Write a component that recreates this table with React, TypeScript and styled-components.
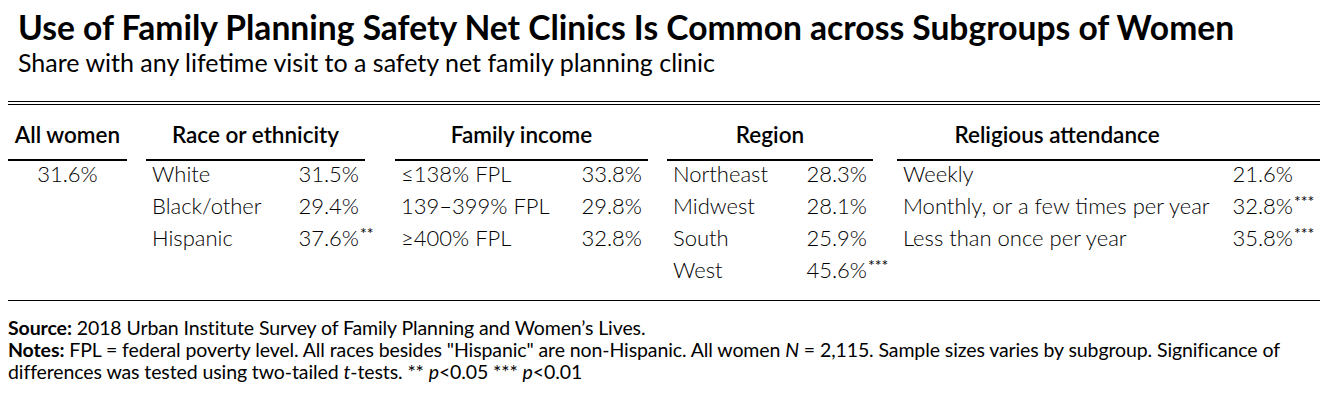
import React from 'react';
import styled, { createGlobalStyle } from 'styled-components';

type Row = { label: string; value: string; sig?: string };
type Group = {
  title: string;
  width: number;
  gapBefore: number;
  valueInset?: number;
  headerShift?: number;
  rows: Row[];
  center?: boolean;
};

const GlobalStyle = createGlobalStyle`
  body {
    margin: 0;
    background: #fff;
    color: #000;
    font-family: Lato, "Open Sans", sans-serif;
  }
`;

const Page = styled.div`
  width: 1328px;
  height: 401px;
  padding: 0 8px;
  box-sizing: border-box;
  overflow: hidden;
`;

const Title = styled.h1`
  margin: 0;
  padding: 10px 0 0 10px;
  font-size: 33.6px;
  line-height: 34px;
  font-weight: 700;
  white-space: nowrap;
`;

const Subtitle = styled.h2`
  margin: 4px 0 0;
  padding-left: 10px;
  font-size: 25px;
  line-height: 28px;
  font-weight: 400;
  white-space: nowrap;
`;

const Table = styled.div`
  margin-top: 25px;
  border-top: 4px double #000;
  border-bottom: 1px solid #000;
  display: flex;
  align-items: flex-start;
  padding-bottom: 11px;
`;

const Column = styled.div<{ $width: number; $gap: number }>`
  width: ${({ $width }) => $width}px;
  margin-left: ${({ $gap }) => $gap}px;
  flex: none;
`;

const Header = styled.div<{ $shift: number }>`
  height: 56px;
  display: flex;
  align-items: flex-end;
  justify-content: center;
  padding: 0 ${({ $shift }) => $shift}px 11px 0;
  box-sizing: border-box;
  border-bottom: 2px solid #000;
  font-size: 22.5px;
  font-weight: 600;
  line-height: 26px;
  white-space: nowrap;
`;

const DataRow = styled.div<{ $center?: boolean }>`
  height: 32px;
  box-sizing: border-box;
  padding: 0 6px 8px;
  display: flex;
  align-items: center;
  justify-content: ${({ $center }) => ($center ? 'center' : 'space-between')};
  font-size: 22px;
  font-weight: 300;
  white-space: nowrap;
`;

const Value = styled.span<{ $inset: number }>`
  position: relative;
  margin-right: ${({ $inset }) => $inset}px;
`;

const Sig = styled.sup`
  position: absolute;
  left: 100%;
  top: 1px;
  margin-left: 1px;
  font-size: 16px;
  font-weight: 400;
  line-height: 1;
`;

const Notes = styled.div`
  padding-top: 16px;
  font-size: 19.5px;
  line-height: 22px;
  letter-spacing: -0.1px;
`;

const NoteLine = styled.p`
  margin: 0;
  white-space: nowrap;
`;

const groups: Group[] = [
  { title: 'All women', width: 119, gapBefore: 0, center: true, rows: [{ label: '', value: '31.6%' }] },
  {
    title: 'Race or ethnicity',
    width: 219,
    gapBefore: 19,
    rows: [
      { label: 'White', value: '31.5%' },
      { label: 'Black/other', value: '29.4%' },
      { label: 'Hispanic', value: '37.6%', sig: '**' },
    ],
  },
  {
    title: 'Family income',
    width: 253,
    gapBefore: 30,
    rows: [
      { label: '≤138% FPL', value: '33.8%' },
      { label: '139–399% FPL', value: '29.8%' },
      { label: '≥400% FPL', value: '32.8%' },
    ],
  },
  {
    title: 'Region',
    width: 206,
    gapBefore: 19,
    rows: [
      { label: 'Northeast', value: '28.3%' },
      { label: 'Midwest', value: '28.1%' },
      { label: 'South', value: '25.9%' },
      { label: 'West', value: '45.6%', sig: '***' },
    ],
  },
  {
    title: 'Religious attendance',
    width: 423,
    gapBefore: 24,
    valueInset: 21,
    headerShift: 103,
    rows: [
      { label: 'Weekly', value: '21.6%' },
      { label: 'Monthly, or a few times per year', value: '32.8%', sig: '***' },
      { label: 'Less than once per year', value: '35.8%', sig: '***' },
    ],
  },
];

export default function App() {
  return (
    <>
      <GlobalStyle />
      <Page>
        <Title>Use of Family Planning Safety Net Clinics Is Common across Subgroups of Women</Title>
        <Subtitle>Share with any lifetime visit to a safety net family planning clinic</Subtitle>
        <Table>
          {groups.map((g) => (
            <Column key={g.title} $width={g.width} $gap={g.gapBefore}>
              <Header $shift={g.headerShift ?? 0}>{g.title}</Header>
              {g.rows.map((r) => (
                <DataRow key={r.value + r.label} $center={g.center}>
                  {r.label && <span>{r.label}</span>}
                  <Value $inset={g.valueInset ?? 0}>
                    {r.value}
                    {r.sig && <Sig>{r.sig}</Sig>}
                  </Value>
                </DataRow>
              ))}
            </Column>
          ))}
        </Table>
        <Notes>
          <NoteLine>
            <b>Source:</b> 2018 Urban Institute Survey of Family Planning and Women’s Lives.
          </NoteLine>
          <NoteLine>
            <b>Notes:</b> FPL = federal poverty level. All races besides "Hispanic" are non-Hispanic. All women{' '}
            <i>N</i> = 2,115. Sample sizes varies by subgroup. Significance of
          </NoteLine>
          <NoteLine>
            differences was tested using two-tailed <i>t</i>-tests. ** <i>p</i>&lt;0.05 *** <i>p</i>&lt;0.01
          </NoteLine>
        </Notes>
      </Page>
    </>
  );
}
